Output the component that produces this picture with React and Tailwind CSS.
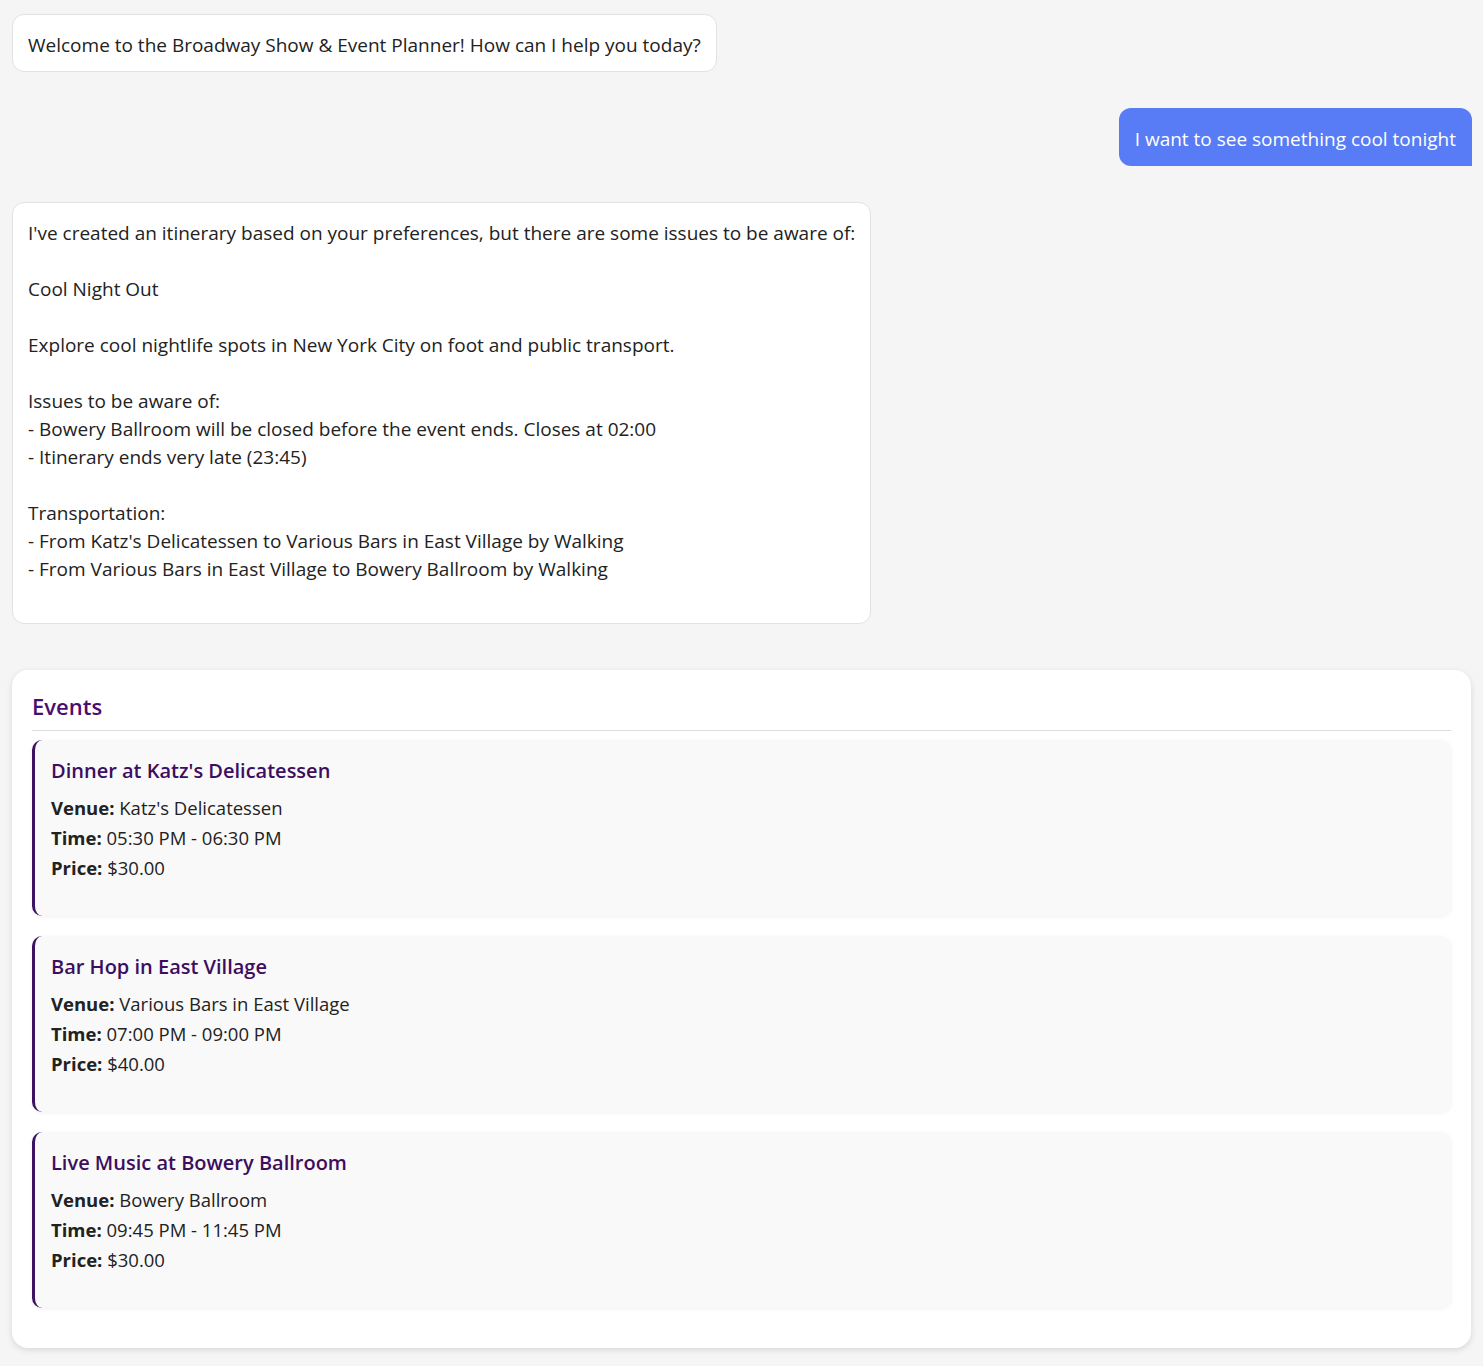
import React from "react";

const itinerary = `I've created an itinerary based on your preferences, but there are some issues to be aware of:

Cool Night Out

Explore cool nightlife spots in New York City on foot and public transport.

Issues to be aware of:
- Bowery Ballroom will be closed before the event ends. Closes at 02:00
- Itinerary ends very late (23:45)

Transportation:
- From Katz's Delicatessen to Various Bars in East Village by Walking
- From Various Bars in East Village to Bowery Ballroom by Walking`;

const events = [
  { title: "Dinner at Katz's Delicatessen", venue: "Katz's Delicatessen", time: "05:30 PM - 06:30 PM", price: "$30.00" },
  { title: "Bar Hop in East Village", venue: "Various Bars in East Village", time: "07:00 PM - 09:00 PM", price: "$40.00" },
  { title: "Live Music at Bowery Ballroom", venue: "Bowery Ballroom", time: "09:45 PM - 11:45 PM", price: "$30.00" },
];

export default function App() {
  return (
    <div
      className="min-h-[1366px] bg-[#f5f5f5] px-3 pt-[14px] text-[#222] text-[19px]"
      style={{ fontFamily: "'Open Sans', 'Noto Sans', sans-serif" }}
    >
      <div className="flex flex-col">
        <div className="self-start rounded-xl border border-[#e2e2e2] bg-white px-[15px] pt-4 pb-3 leading-[28px]">
          Welcome to the Broadway Show &amp; Event Planner! How can I help you today?
        </div>
        <div className="mt-9 self-end mr-[-1px] rounded-t-xl rounded-bl-xl bg-[#577cf5] px-4 pt-[17px] pb-[13px] leading-[28px] text-white">
          I want to see something cool tonight
        </div>
        <div className="mt-9 self-start whitespace-pre-wrap rounded-xl border border-[#e2e2e2] bg-white px-[15px] pt-4 pb-[40px] leading-[28px]">
          {itinerary}
        </div>
      </div>

      <div className="mt-[46px] rounded-2xl bg-white px-5 pt-5 pb-5 shadow-[0_2px_6px_rgba(0,0,0,0.12)]">
        <h2 className="border-b border-[#dddddd] pb-[8px] text-[22px] font-semibold leading-[32px] text-[#4a0e70]">
          Events
        </h2>
        <div className="mt-[9px] flex flex-col text-[18.5px]">
          {events.map((e) => (
            <div
              key={e.title}
              className="mb-5 h-[176px] rounded-[10px] border-l-[3px] border-[#3d1263] bg-[#f9f9f9] px-4 pt-4 shadow-[0_1px_4px_rgba(0,0,0,0.06)]"
            >
              <div className="text-[20px] font-semibold leading-[30px] text-[#3d0d5e]">{e.title}</div>
              <div className="mt-[7px] leading-[30px]">
                <div><span className="font-bold">Venue:</span> {e.venue}</div>
                <div><span className="font-bold">Time:</span> {e.time}</div>
                <div><span className="font-bold">Price:</span> {e.price}</div>
              </div>
            </div>
          ))}
        </div>
      </div>
    </div>
  );
}
